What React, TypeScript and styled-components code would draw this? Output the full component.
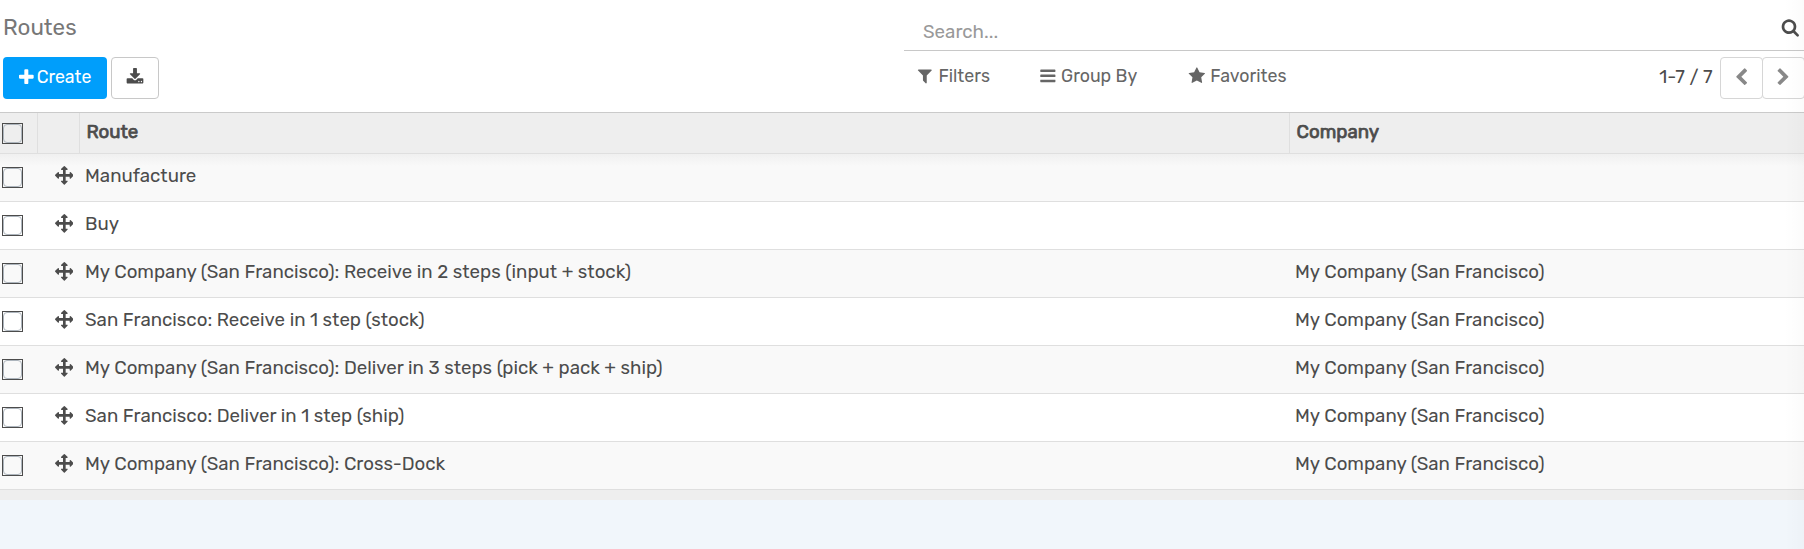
import React from "react";
import styled, { createGlobalStyle } from "styled-components";

const Global = createGlobalStyle`
  *, *::before, *::after { box-sizing: border-box; }
  body {
    margin: 0;
    background: #f1f6fb;
    color: #4c4c4c;
    font-family: Rubik, Roboto, sans-serif;
    font-size: 18.68px;
    line-height: 28px;
    overflow: hidden;
  }
`;

const paths = {
  plus: "M1600 736v192q0 40-28 68t-68 28h-416v416q0 40-28 68t-68 28h-192q-40 0-68-28t-28-68v-416h-416q-40 0-68-28t-28-68v-192q0-40 28-68t68-28h416v-416q0-40 28-68t68-28h192q40 0 68 28t28 68v416h416q40 0 68 28t28 68z",
  download: "M1344 1344q0-26-19-45t-45-19-45 19-19 45 19 45 45 19 45-19 19-45zm256 0q0-26-19-45t-45-19-45 19-19 45 19 45 45 19 45-19 19-45zm128-224v320q0 40-28 68t-68 28h-1472q-40 0-68-28t-28-68v-320q0-40 28-68t68-28h465l135 136q58 56 136 56t136-56l136-136h464q40 0 68 28t28 68zm-325-569q17 41-14 70l-448 448q-18 19-45 19t-45-19l-448-448q-31-29-14-70 17-39 59-39h256v-448q0-26 19-45t45-19h256q26 0 45 19t19 45v448h256q42 0 59 39z",
  move: "M1792 896q0 26-19 45l-256 256q-19 19-45 19t-45-19-19-45v-128h-384v384h128q26 0 45 19t19 45-19 45l-256 256q-19 19-45 19t-45-19l-256-256q-19-19-19-45t19-45 45-19h128v-384h-384v128q0 26-19 45t-45 19-45-19l-256-256q-19-19-19-45t19-45l256-256q19-19 45-19t45 19 19 45v128h384v-384h-128q-26 0-45-19t-19-45 19-45l256-256q19-19 45-19t45 19l256 256q19 19 19 45t-19 45-45 19h-128v384h384v-128q0-26 19-45t45-19 45 19l256 256q19 19 19 45z",
  filter: "M1595 295q17 41-14 70l-493 493v742q0 42-39 59-13 5-25 5-27 0-45-19l-256-256q-19-19-19-45v-486l-493-493q-31-29-14-70 17-39 59-39h1280q42 0 59 39z",
  bars: "M1664 1344v128q0 26-19 45t-45 19h-1408q-26 0-45-19t-19-45v-128q0-26 19-45t45-19h1408q26 0 45 19t19 45zm0-512v128q0 26-19 45t-45 19h-1408q-26 0-45-19t-19-45v-128q0-26 19-45t45-19h1408q26 0 45 19t19 45zm0-512v128q0 26-19 45t-45 19h-1408q-26 0-45-19t-19-45v-128q0-26 19-45t45-19h1408q26 0 45 19t19 45z",
  star: "M1728 647q0 22-26 48l-363 354 86 500q1 7 1 20 0 21-10.500 35.500t-30.500 14.500q-19 0-40-12l-449-236-449 236q-22 12-40 12-21 0-31.500-14.500t-10.500-35.500q0-6 2-20l86-500-364-354q-25-27-25-48 0-37 56-46l502-73 225-455q19-41 49-41t49 41l225 455 502 73q56 9 56 46z",
  left: "M1427 301l-531 531 531 531q19 19 19 45t-19 45l-166 166q-19 19-45 19t-45-19l-742-742q-19-19-19-45t19-45l742-742q19-19 45-19t45 19l166 166q19 19 19 45t-19 45z",
  right: "M1363 877l-742 742q-19 19-45 19t-45-19l-166-166q-19-19-19-45t19-45l531-531-531-531q-19-19-19-45t19-45l166-166q19-19 45-19t45 19l742 742q19 19 19 45t-19 45z",
  search: "M1216 832q0-185-131.500-316.500t-316.500-131.500-316.500 131.500-131.500 316.500 131.500 316.500 316.500 131.500 316.500-131.500 131.500-316.500zm512 832q0 52-38 90t-90 38q-54 0-90-38l-343-342q-179 124-399 124-143 0-273.500-55.500t-225-150-150-225-55.500-273.500 55.500-273.500 150-225 225-150 273.500-55.500 273.500 55.500 225 150 150 225 55.500 273.500q0 220-124 399l343 343q37 37 37 90z",
};

const Svg = styled.svg<{ $size: number }>`
  display: block;
  flex: none;
  width: ${(p) => p.$size}px;
  height: ${(p) => p.$size}px;
  fill: currentColor;
`;

function Icon({ name, size = 18.667 }: { name: keyof typeof paths; size?: number }) {
  return (
    <Svg $size={size} viewBox="0 0 1792 1792" aria-hidden="true">
      <path d={paths[name]} />
    </Svg>
  );
}

const Label = styled.span`
  white-space: nowrap;
`;

const Page = styled.div`
  position: relative;
  height: 549px;
  overflow: hidden;
`;

const EdgeFade = styled.div`
  position: absolute;
  inset: 0 0 0 auto;
  width: 20px;
  background: linear-gradient(to right, rgba(0, 0, 0, 0), rgba(0, 0, 0, 0.015));
  pointer-events: none;
`;

const ControlPanel = styled.header`
  display: flex;
  justify-content: space-between;
  height: 113px;
  background: #fff;
  border-bottom: 1px solid #cacaca;
`;

const PanelLeft = styled.div`
  padding: 13px 0 0 3px;
`;

const Title = styled.h1`
  margin: 0 0 15px;
  height: 29px;
  font-size: 22.4px;
  line-height: 29px;
  font-weight: 400;
  color: #777;
`;

const Buttons = styled.div`
  display: flex;
  gap: 4px;
`;

const CreateButton = styled.button`
  display: flex;
  align-items: center;
  gap: 1.4px;
  width: 104px;
  height: 42px;
  padding: 0 0 2px 13.6px;
  border: 0;
  border-radius: 4px;
  background: #009efb;
  color: #fff;
  font: inherit;
  font-size: 17.7px;
`;

const ExportButton = styled.button`
  display: flex;
  align-items: center;
  justify-content: center;
  width: 48px;
  height: 42px;
  padding: 0 0 2px;
  border: 1px solid #c8c8c8;
  border-radius: 4px;
  background: #fff;
  color: #4c4c4c;
`;

const PanelRight = styled.div`
  width: 900px;
`;

const SearchBar = styled.div`
  display: flex;
  justify-content: space-between;
  height: 51px;
  padding: 18px 4px 0 19px;
  border-bottom: 1px solid #c8c8c8;
  color: #4c4c4c;
`;

const Placeholder = styled.span`
  color: #999;
`;

const Tools = styled.div`
  display: flex;
  height: 61px;
  padding-left: 12.3px;
`;

const Menu = styled.button<{ $width: number }>`
  display: flex;
  align-items: center;
  gap: 4.4px;
  width: ${(p) => p.$width}px;
  height: 28px;
  margin: 11px 0 0;
  padding: 0;
  border: 0;
  background: none;
  color: #666;
  font: inherit;
  font-size: 17.75px;
`;

const Pager = styled.div`
  display: flex;
  align-items: flex-start;
  margin: 6px -1px 0 auto;
`;

const Range = styled.span`
  margin: 6px 7.4px 0 0;
`;

const PageButton = styled.button`
  display: flex;
  align-items: center;
  justify-content: center;
  width: 43px;
  height: 42px;
  padding: 0 1px 1px 0;
  border: 1px solid #d6d6d6;
  border-radius: 4px;
  background: #fff;
  color: #888;
  & + & { margin-left: -1px; }
`;

const grid = "38px 42px 1210px 1fr";

const HeadRow = styled.div`
  display: grid;
  grid-template-columns: ${grid};
  height: 41px;
  background: #eee;
  border-bottom: 1px solid #dfdfdf;
  -webkit-text-stroke: 0.75px currentColor;
`;

const HeadCell = styled.div`
  padding: 5px 0 0 6.5px;
  border-right: 1px solid #dfdfdf;
  &:first-child { padding: 10px 0 0 2px; }
  &:last-child { border-right: 0; }
`;

const Row = styled.div<{ $shadow: boolean; $odd: boolean }>`
  display: grid;
  grid-template-columns: ${grid};
  height: 48px;
  border-bottom: 1px solid #dfdfdf;
  background: ${(p) => (p.$shadow ? "linear-gradient(#f0f0f0, #f9f9f9 12px)" : p.$odd ? "#f9f9f9" : "#fff")};
`;

const Cell = styled.div`
  padding: 8px 0 0 5px;
`;

const CheckCell = styled.div`
  padding: 13px 0 0 2px;
`;

const HandleCell = styled.div`
  padding: 12px 0 0 16.7px;
`;

const CheckFrame = styled.span`
  display: block;
  width: 21px;
  height: 21px;
  border: 1px solid #4c4c4c;
  &::before {
    content: "";
    display: block;
    width: 19px;
    height: 19px;
    border: 1px solid #adb5bd;
    border-radius: 4px;
  }
`;

const Footer = styled.div`
  height: 10px;
  background: #eee;
`;

const company = "My Company (San Francisco)";
const rows = [
  { name: "Manufacture", company: "" },
  { name: "Buy", company: "" },
  { name: "My Company (San Francisco): Receive in 2 steps (input + stock)", company },
  { name: "San Francisco: Receive in 1 step (stock)", company },
  { name: "My Company (San Francisco): Deliver in 3 steps (pick + pack + ship)", company },
  { name: "San Francisco: Deliver in 1 step (ship)", company },
  { name: "My Company (San Francisco): Cross-Dock", company },
];

export default function App() {
  return (
    <Page>
      <Global />
      <ControlPanel>
        <PanelLeft>
          <Title>Routes</Title>
          <Buttons>
            <CreateButton><Icon name="plus" /><Label>Create</Label></CreateButton>
            <ExportButton aria-label="Export"><Icon name="download" size={18} /></ExportButton>
          </Buttons>
        </PanelLeft>
        <PanelRight>
          <SearchBar>
            <Placeholder>Search...</Placeholder>
            <Icon name="search" />
          </SearchBar>
          <Tools>
            <Menu $width={122.7}><Icon name="filter" size={17.7} /><Label>Filters</Label></Menu>
            <Menu $width={149.3}><Icon name="bars" size={17.7} /><Label>Group By</Label></Menu>
            <Menu $width={110}><Icon name="star" size={17.7} /><Label>Favorites</Label></Menu>
            <Pager>
              <Range>1-7 / 7</Range>
              <PageButton aria-label="Previous"><Icon name="left" /></PageButton>
              <PageButton aria-label="Next"><Icon name="right" /></PageButton>
            </Pager>
          </Tools>
        </PanelRight>
      </ControlPanel>
      <HeadRow>
        <HeadCell><CheckFrame /></HeadCell>
        <HeadCell />
        <HeadCell><Label>Route</Label></HeadCell>
        <HeadCell><Label>Company</Label></HeadCell>
      </HeadRow>
      {rows.map((row, i) => (
        <Row key={row.name} $shadow={i === 0} $odd={i % 2 === 0}>
          <CheckCell><CheckFrame /></CheckCell>
          <HandleCell><Icon name="move" /></HandleCell>
          <Cell><Label>{row.name}</Label></Cell>
          <Cell><Label>{row.company}</Label></Cell>
        </Row>
      ))}
      <Footer />
      <EdgeFade />
    </Page>
  );
}
